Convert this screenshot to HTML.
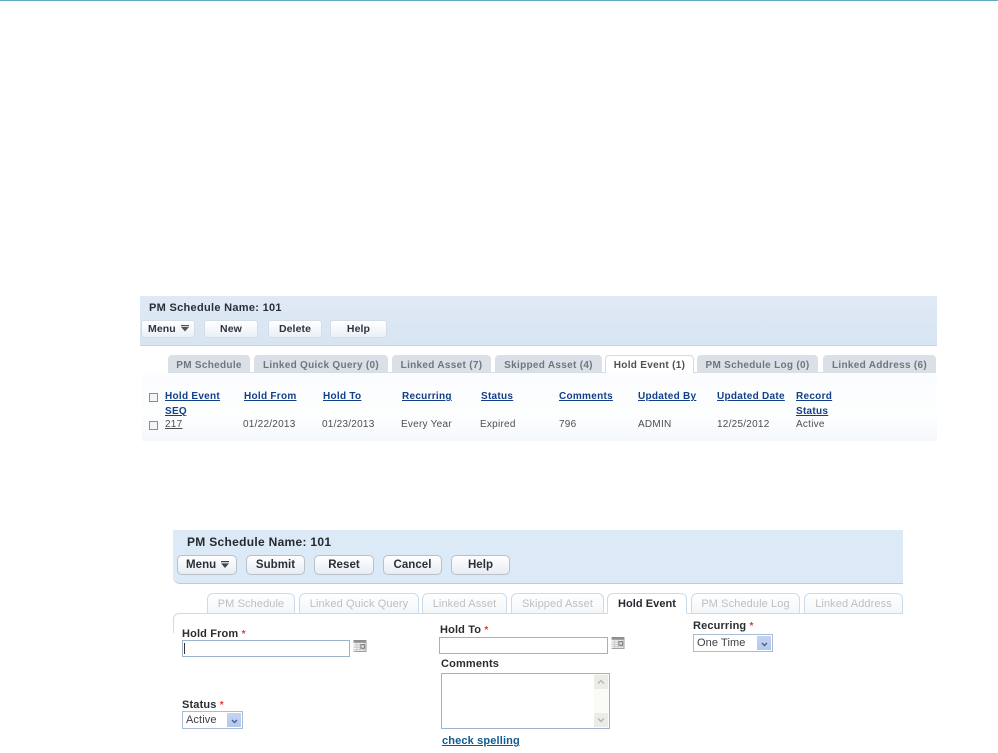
<!DOCTYPE html>
<html><head><meta charset="utf-8">
<style>
html,body{margin:0;padding:0;background:#fff}
body{width:998px;height:753px;position:relative;overflow:hidden;font-family:"Liberation Sans",Arial,sans-serif}
div,a,span.p{position:absolute;box-sizing:border-box;white-space:nowrap}
.top{left:0;top:0;width:998px;height:1px;background:#64a9c3}
#a{left:0;top:0;width:998px;height:753px;filter:blur(.35px)}
.p1{left:140px;top:296px;width:797px;height:50px;background:linear-gradient(#e0eaf6,#d7e4f2);border-bottom:1px solid #c5d6e8}
.fade{left:142px;top:373px;width:795px;height:68px;background:linear-gradient(#fbfcfe,#fdfefe 60%,#f5f8fb)}
.t1{font-size:11px;font-weight:bold;color:#2a2f36;letter-spacing:.3px}
.b1{top:320px;height:18px;background:linear-gradient(#fff,#e9eff7);border:1px solid #d5dde7;border-radius:3px;font-size:10.5px;font-weight:bold;color:#2d3440;text-align:center;line-height:16px;letter-spacing:.1px}
.tab1{top:355px;height:18px;background:#dbe0e6;border-radius:4px 4px 0 0;font-size:10px;font-weight:bold;color:#6f7680;text-align:center;line-height:21px;letter-spacing:.3px}
.tab1.on{background:#fff;color:#4d5157;border:1px solid #cfdbe7;border-bottom:0;line-height:19px;font-weight:bold}
.line1{left:168px;top:372px;width:768px;height:1px;background:#d4dde6}
.h{font-size:10px;font-weight:bold;color:#123f88;text-decoration:underline;letter-spacing:.28px;line-height:15px}
.c{font-size:10px;color:#4b4f55;top:418px;line-height:13px;letter-spacing:.25px}
.cb{width:9px;height:9px;border:1px solid #8a8e93;background:#f4f4f4;left:149px}
.p2{left:173px;top:530px;width:730px;height:54px;background:#dce9f6;border-bottom:1px solid #b5cfe9;border-radius:0 0 0 7px}
.t2{font-size:12px;font-weight:bold;color:#26292d;letter-spacing:.3px}
.b2{top:555px;height:20px;background:linear-gradient(#fff,#e7edf5);border:1px solid #b9c0c8;border-radius:5px;font-size:11.5px;font-weight:bold;color:#2a303a;text-align:center;line-height:19px;letter-spacing:.05px}
.tab2{top:593px;height:21px;background:linear-gradient(#fff,#f3f6f9);border:1px solid #c8dcef;border-bottom:1px solid #c8dcef;border-radius:6px 6px 0 0;font-size:11px;color:#bdbfc2;text-align:center;line-height:20px;letter-spacing:.1px}
.tab2.on{background:#fff;border-bottom:1px solid #fff;color:#26292d;font-weight:bold;z-index:2;letter-spacing:.05px}
.body2{left:173px;top:613px;width:730px;height:20px;border-top:1px solid #c8dcef;border-left:1px solid #c8dcef;border-radius:6px 0 0 0;border-bottom:0}
.l{font-size:11px;font-weight:bold;color:#2a2d31;letter-spacing:.15px;line-height:13px}
.l b{color:#e33;font-weight:bold;font-size:10px}
.in{height:17px;background:#fff;border:1px solid #9bb3cb}
.sel{background:#fff;border:1px solid #a9bdd2;font-size:11px;color:#3b3f45;line-height:17px;padding-left:3px;letter-spacing:.1px}
.ar{right:1px;top:1px;bottom:1px;width:14px;background:linear-gradient(#c3d3f3,#b4c8ee)}
.cal{width:14px;height:12px}
</style></head><body>
<div class="top"></div>

<div id="a">
<div class="p1"></div>
<div class="fade"></div>
<div class="t1" style="left:149px;top:302px">PM Schedule Name: 101</div>
<div class="b1" style="left:141px;width:54px;text-align:left;padding-left:6px">Menu
<svg style="position:absolute;left:39px;top:4px" width="8" height="7"><path d="M0 0h8v1.2H0zM0 2h8L4 6.5z" fill="#555"/></svg></div>
<div class="b1" style="left:204px;width:54px">New</div>
<div class="b1" style="left:268px;width:54px">Delete</div>
<div class="b1" style="left:330px;width:57px">Help</div>

<div class="tab1" style="left:168px;width:82px">PM Schedule</div>
<div class="tab1" style="left:254px;width:134px">Linked Quick Query (0)</div>
<div class="tab1" style="left:392px;width:99px">Linked Asset (7)</div>
<div class="tab1" style="left:495px;width:107px">Skipped Asset (4)</div>
<div class="line1"></div>
<div class="tab1 on" style="left:605px;width:89px">Hold Event (1)</div>
<div class="tab1" style="left:697px;width:121px">PM Schedule Log (0)</div>
<div class="tab1" style="left:823px;width:113px">Linked Address (6)</div>

<div class="cb" style="top:393px"></div>
<div class="h" style="left:165px;top:389px">Hold Event<br>SEQ</div>
<div class="h" style="left:244px;top:389px">Hold From</div>
<div class="h" style="left:323px;top:389px">Hold To</div>
<div class="h" style="left:402px;top:389px">Recurring</div>
<div class="h" style="left:481px;top:389px">Status</div>
<div class="h" style="left:559px;top:389px">Comments</div>
<div class="h" style="left:638px;top:389px">Updated By</div>
<div class="h" style="left:717px;top:389px">Updated Date</div>
<div class="h" style="left:796px;top:389px">Record<br>Status</div>

<div class="cb" style="top:421px"></div>
<div class="c" style="left:165px;text-decoration:underline">217</div>
<div class="c" style="left:243px">01/22/2013</div>
<div class="c" style="left:322px">01/23/2013</div>
<div class="c" style="left:401px">Every Year</div>
<div class="c" style="left:480px">Expired</div>
<div class="c" style="left:559px">796</div>
<div class="c" style="left:638px">ADMIN</div>
<div class="c" style="left:717px">12/25/2012</div>
<div class="c" style="left:796px">Active</div>
</div>

<div class="p2"></div>
<div class="t2" style="left:187px;top:535px">PM Schedule Name: 101</div>
<div class="b2" style="left:177px;width:60px;text-align:left;padding-left:8px">Menu
<svg style="position:absolute;left:43px;top:5px" width="8" height="8"><path d="M0 0h8v1.3H0zM0 2.4h8L4 7z" fill="#444"/></svg></div>
<div class="b2" style="left:246px;width:59px">Submit</div>
<div class="b2" style="left:314px;width:60px">Reset</div>
<div class="b2" style="left:383px;width:59px">Cancel</div>
<div class="b2" style="left:451px;width:59px">Help</div>

<div class="body2"></div>
<div class="tab2" style="left:207px;width:88px">PM Schedule</div>
<div class="tab2" style="left:299px;width:120px">Linked Quick Query</div>
<div class="tab2" style="left:422px;width:85px">Linked Asset</div>
<div class="tab2" style="left:511px;width:93px">Skipped Asset</div>
<div class="tab2 on" style="left:607px;width:80px">Hold Event</div>
<div class="tab2" style="left:691px;width:109px">PM Schedule Log</div>
<div class="tab2" style="left:804px;width:99px">Linked Address</div>

<div class="l" style="left:182px;top:628px">Hold From <b>*</b></div>
<div class="in" style="left:182px;top:640px;width:168px"><div style="left:1px;top:2px;width:1px;height:11px;background:#333"></div></div>
<svg class="cal" style="position:absolute;left:353px;top:640px" width="14" height="13" viewBox="0 0 14 13"><rect width="14" height="13" fill="#f1f1f1"/><rect width="14" height="3" fill="#8f8f8f"/><path d="M0 5.5h14M0 8h14M0 10.500h14M3.500 3v10M7 3v10M10.500 3v10" stroke="#c9c9c9" stroke-width="1"/><rect x="8" y="5" width="4" height="4" fill="none" stroke="#777"/><path d="M13.500 0v13M0 12.500h14" stroke="#999"/></svg>

<div class="l" style="left:440px;top:624px">Hold To <b>*</b></div>
<div class="in" style="left:439px;top:637px;width:169px"></div>
<svg class="cal" style="position:absolute;left:611px;top:637px" width="14" height="13" viewBox="0 0 14 13"><rect width="14" height="13" fill="#f1f1f1"/><rect width="14" height="3" fill="#8f8f8f"/><path d="M0 5.500h14M0 8h14M0 10.500h14M3.500 3v10M7 3v10M10.500 3v10" stroke="#c9c9c9" stroke-width="1"/><rect x="8" y="5" width="4" height="4" fill="none" stroke="#777"/><path d="M13.500 0v13M0 12.500h14" stroke="#999"/></svg>

<div class="l" style="left:441px;top:658px">Comments</div>
<div style="left:441px;top:673px;width:169px;height:56px;background:#fff;border:1px solid #9bb3cb">
<div style="right:0;top:0;bottom:0;width:15px;background:#fbfbf5"></div>
<div style="right:1px;top:1px;width:14px;height:14px;background:#ecece6"><svg style="position:absolute;left:3px;top:4px" width="8" height="6"><path d="M1 4.500l3-3 3 3" fill="none" stroke="#b5b5b0" stroke-width="1.300"/></svg></div>
<div style="right:1px;bottom:1px;width:14px;height:14px;background:#ecece6"><svg style="position:absolute;left:3px;top:4px" width="8" height="6"><path d="M1 1.500l3 3 3-3" fill="none" stroke="#b5b5b0" stroke-width="1.300"/></svg></div>
</div>
<a style="left:442px;top:735px;font-size:11px;font-weight:bold;color:#0f5b94;text-decoration:underline;letter-spacing:.15px;line-height:13px">check spelling</a>

<div class="l" style="left:182px;top:699px">Status <b>*</b></div>
<div class="sel" style="left:182px;top:711px;width:61px;height:18px">Active
<div class="ar"><svg style="position:absolute;left:4px;top:6px" width="7" height="5"><path d="M1 1l2.500 2.500L6 1" fill="none" stroke="#4d6185" stroke-width="1.400"/></svg></div></div>

<div class="l" style="left:693px;top:620px">Recurring <b>*</b></div>
<div class="sel" style="left:693px;top:634px;width:80px;height:18px">One Time
<div class="ar"><svg style="position:absolute;left:4px;top:6px" width="7" height="5"><path d="M1 1l2.500 2.500L6 1" fill="none" stroke="#4d6185" stroke-width="1.400"/></svg></div></div>
</body></html>
